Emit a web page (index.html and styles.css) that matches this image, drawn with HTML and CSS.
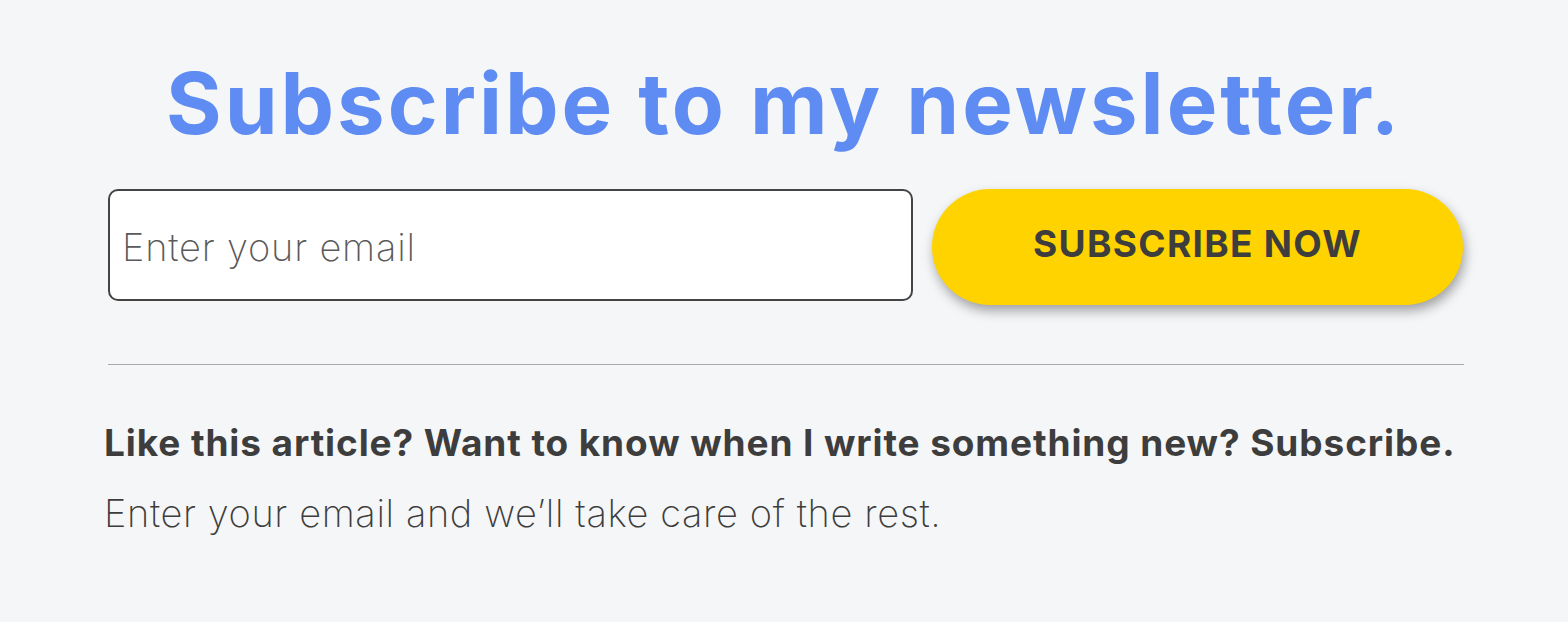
FILE: index.html
```html
<!DOCTYPE html>
<html lang="en">
<head>
<meta charset="utf-8">
<title>Subscribe</title>
<link rel="stylesheet" href="styles.css">
</head>
<body>
<main class="wrap">
  <h1 class="title">Subscribe to my newsletter.</h1>
  <form class="form">
    <div class="field"><input class="email" type="email" placeholder="Enter your email"></div>
    <button class="btn" type="button">SUBSCRIBE NOW</button>
  </form>
  <hr class="rule">
  <p class="lead">Like this article? Want to know when I write something new? Subscribe.</p>
  <p class="sub">Enter your email and we’ll take care of the rest.</p>
</main>
</body>
</html>
```
FILE: styles.css
```css
html, body {
  margin: 0;
  padding: 0;
  background: #f5f6f8;
  font-family: Inter, "Open Sans", sans-serif;
  color: #3d3d3d;
}
.wrap {
  width: 1360px;
  margin: 0 auto;
  padding-top: 54px;
}
.title {
  margin: 0;
  text-align: center;
  font-size: 85px;
  line-height: 100px;
  font-weight: 700;
  color: #5f8cf2;
  letter-spacing: 3px;
}
.form {
  display: flex;
  gap: 19px;
  margin-top: 35px;
  padding-left: 4px;
  align-items: flex-start;
}
.field {
  width: 805px;
  height: 112px;
  box-sizing: border-box;
  border: 2px solid #444;
  border-radius: 10px;
  background: #fff;
  display: flex;
  align-items: center;
  padding-top: 4px;
}
.email {
  border: 0;
  outline: 0;
  background: transparent;
  width: 100%;
  padding: 0 12px;
  font-family: inherit;
  font-size: 38px;
  font-weight: 200;
  letter-spacing: 0.8px;
  color: #555;
}
.email::placeholder { color: #5a5a5a; }
.btn {
  width: 531px;
  height: 116px;
  border: 0;
  border-radius: 58px;
  background: #ffd300;
  box-shadow: 2px 6px 12px rgba(0,0,0,0.35);
  font-family: inherit;
  font-size: 37px;
  font-weight: 700;
  letter-spacing: 1.3px;
  color: #3d3d3d;
  padding: 0 0 7px;
}
.rule {
  margin: 59px 0 0 4px;
  border: 0;
  border-top: 1px solid #a9a9a9;
  height: 0;
}
.lead {
  margin: 56px 0 0;
  font-size: 37px;
  font-weight: 700;
  line-height: 44px;
  letter-spacing: 0.9px;
}
.sub {
  margin: 25px 0 0;
  font-size: 38px;
  font-weight: 200;
  line-height: 46px;
  letter-spacing: 0.6px;
}
```
